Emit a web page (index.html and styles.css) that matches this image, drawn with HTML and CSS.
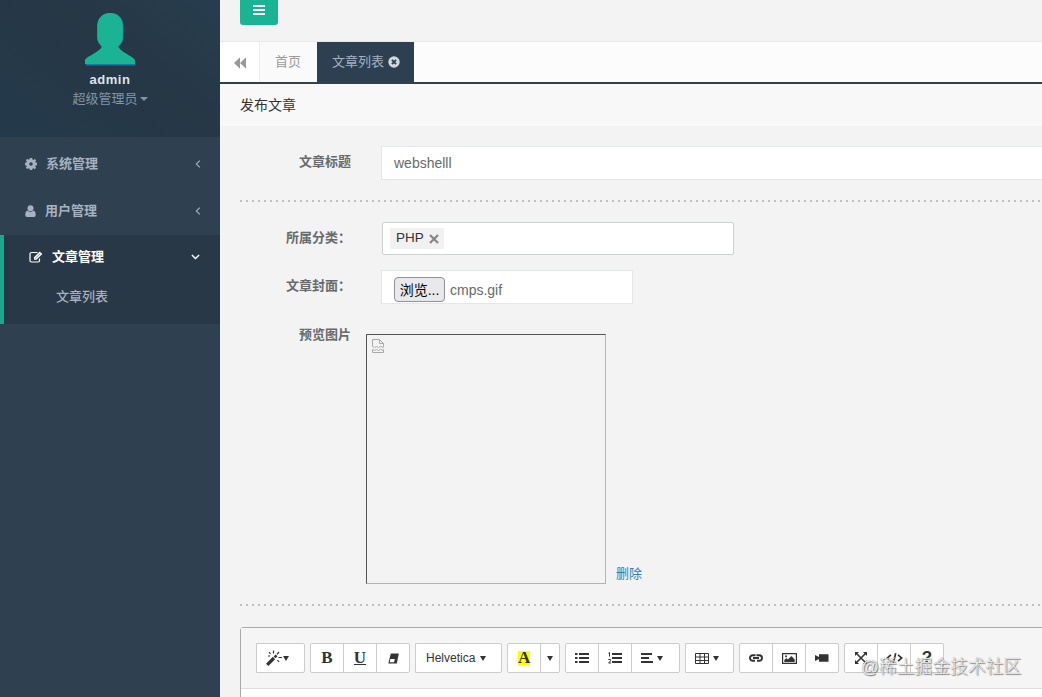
FILE: index.html
```html
<!DOCTYPE html>
<html lang="zh-CN">
<head>
    <meta charset="UTF-8">
    <meta name="viewport" content="width=device-width, initial-scale=1.0">
    <title>发布文章</title>
    <link rel="stylesheet" href="styles.css">
</head>
<body>
    <div class="wrapper">
        <nav class="sidebar">
            <div class="profile">
                <svg class="avatar" width="54" height="56" viewBox="0 0 54 56">
                    <path d="M27.500 1C36 1 40.500 7 40.500 14V25C40.500 30 38 32 36 35C38 41 52.500 46 52.500 50V53.500H3V49C3 45 16 41 19 35C16 32 14.500 30 14.500 25V14C14.500 7 19 1 27.500 1Z" fill="#1a78a0"/>
                    <path d="M27 1C35 1 39.800 7 39.800 14V25C39.800 30 37.500 31.500 35 34.500C37 40 52 45 52 48.500V52H2V48.500C2 45 17 40 19 34.500C16.500 31.500 14.200 30 14.200 25V14C14.200 7 19 1 27 1Z" fill="#1ab394"/>
                </svg>
                <strong class="profile-name">admin</strong>
                <span class="profile-role">超级管理员<i class="caret"></i></span>
            </div>
            <ul class="menu">
                <li class="menu-item">
                    <svg width="12" height="12" viewBox="0 0 12 12"><path fill="currentColor" fill-rule="evenodd" d="M4.800 0h2.400l.3 1.500 1 .4L9.800 1 11.200 2.300l-.9 1.300.3 1L12 4.800v2.400l-1.400.3-.4 1 .9 1.300L9.700 11.200l-1.300-.9-1 .4L7.200 12H4.800l-.3-1.400-1-.4-1.300.9L.8 9.700l.9-1.300-.4-1L0 7.200V4.800l1.400-.3.4-1L.9 2.200 2.300.8l1.300.9 1-.4zM6 4.200a1.800 1.800 0 100 3.600 1.800 1.800 0 000-3.600z"/></svg>
                    <span>系统管理</span>
                    <svg class="arrow" width="6" height="8" viewBox="0 0 6 8"><path d="M4.800.6L1.300 4l3.500 3.400" fill="none" stroke="currentColor" stroke-width="1.100"/></svg>
                </li>
                <li class="menu-item">
                    <svg width="11" height="12" viewBox="0 0 11 12"><circle cx="5.500" cy="3.200" r="3" fill="currentColor"/><path fill="currentColor" d="M2.600 5.500C1 5.700.3 7.500.3 10c0 1.200.7 2 1.700 2h7c1 0 1.700-.8 1.700-2 0-2.500-.7-4.300-2.300-4.500-1.500 1.700-4.300 1.700-5.800 0z"/></svg>
                    <span>用户管理</span>
                    <svg class="arrow" width="6" height="8" viewBox="0 0 6 8"><path d="M4.800.6L1.300 4l3.500 3.400" fill="none" stroke="currentColor" stroke-width="1.100"/></svg>
                </li>
                <li class="menu-active">
                    <div class="menu-item">
                        <svg width="14" height="12" viewBox="0 0 14 12"><path d="M8.500 1.500H2.500a1.500 1.500 0 00-1.500 1.500v6.500A1.500 1.500 0 002.500 11H9a1.500 1.500 0 001.500-1.500V7.500" fill="none" stroke="currentColor" stroke-width="1.200"/><path fill="currentColor" d="M5 6.200L10.800.5 13.300 3 7.500 8.800H5z"/><path d="M6.200 7.500l5.300-5.200" stroke="#293846" stroke-width=".6"/></svg>
                        <span>文章管理</span>
                        <svg class="arrow" width="9" height="6" viewBox="0 0 9 6"><path d="M.9 1l3.600 3.500L8.100 1" fill="none" stroke="currentColor" stroke-width="1.400"/></svg>
                    </div>
                    <a class="submenu">文章列表</a>
                </li>
            </ul>
        </nav>

        <main class="page">
            <div class="navbar">
                <button class="toggle" type="button">
                    <svg width="12" height="10" viewBox="0 0 12 10"><path d="M0 1h12M0 5h12M0 9h12" stroke="#fff" stroke-width="2"/></svg>
                </button>
            </div>
            <div class="tabs">
                <div class="roll"><svg width="12" height="12" viewBox="0 0 12 12"><path d="M6 .3v11.400L0 6zM12 .3v11.400L6 6z" fill="#999"/></svg></div>
                <div class="tab">首页</div>
                <div class="tab active">文章列表<svg width="12" height="12" viewBox="0 0 12 12"><circle cx="6" cy="6" r="5.700" fill="#d3d8dd"/><path d="M3.900 3.900l4.200 4.200M8.100 3.900L3.900 8.100" stroke="#2f4050" stroke-width="1.800"/></svg></div>
            </div>
            <h5 class="title">发布文章</h5>

            <form class="form">
                <div class="row">
                    <label>文章标题</label>
                    <div class="control">webshelll</div>
                </div>
                <div class="hr-line"></div>
                <div class="row">
                    <label>所属分类：</label>
                    <div class="chosen">
                        <span class="tag">PHP<svg width="10" height="10" viewBox="0 0 10 10"><path d="M1 1l8 8M9 1L1 9" stroke="#858585" stroke-width="2.200"/></svg></span>
                    </div>
                </div>
                <div class="row cover">
                    <label>文章封面：</label>
                    <div class="control file">
                        <button type="button">浏览...</button>
                        <span>cmps.gif</span>
                    </div>
                </div>
                <div class="row preview">
                    <label>预览图片</label>
                    <div class="preview-box">
                        <svg width="12" height="14" viewBox="0 0 12 14" fill="none" stroke="#a9a9a9"><path d="M.5 7.500V.5H7.500L11.500 4.500V8M7.500.5V4.500H11.500M.5 7l2 2 2-2 2 2 2-2 3 2M.5 10.500V13.500H11.500V10.500M.5 10l2 2 2-2 2 2 2-2 3 2"/></svg>
                    </div>
                    <a class="delete">删除</a>
                </div>
                <div class="hr-line"></div>

                <div class="editor">
                    <div class="toolbar">
                        <div class="btn-group">
                            <span class="btn wide"><svg width="17" height="16" viewBox="0 0 17 16"><path d="M1.200 14.800L8 8" stroke="#333" stroke-width="3.200"/><path d="M8.600 7.400l2-2" stroke="#333" stroke-width="2.600"/><path d="M3 2l1.500 2M7.500.5v3M13 2l-2 2.300M12.500 7.500H16M11.500 10l1.500 2M2 6h2" stroke="#333" stroke-width="1.200"/></svg><i class="caret"></i></span>
                        </div>
                        <div class="btn-group">
                            <span class="btn letter">B</span>
                            <span class="btn letter under">U</span>
                            <span class="btn"><svg width="11" height="11" viewBox="0 0 11 11"><path d="M2.800.5h8L8.800 10.500H.3z" fill="#333"/><path d="M2.300 6h4.500l-.8 3.200H1.700z" fill="#fff"/></svg></span>
                        </div>
                        <div class="btn-group">
                            <span class="btn font">Helvetica<i class="caret"></i></span>
                        </div>
                        <div class="btn-group">
                            <span class="btn letter"><mark>A</mark></span>
                            <span class="btn narrow"><i class="caret"></i></span>
                        </div>
                        <div class="btn-group">
                            <span class="btn"><svg width="14" height="10" viewBox="0 0 14 10"><path d="M0 1h2.500M0 5h2.500M0 9h2.500M4 1h10M4 5h10M4 9h10" stroke="#333" stroke-width="2"/></svg></span>
                            <span class="btn"><svg width="14" height="12" viewBox="0 0 14 12"><path d="M4 2h10M4 6h10M4 10h10" stroke="#333" stroke-width="2"/><path d="M.5 1.200l1-.7v4M.3 7.500h2.200v1.300L.6 11h2.400" fill="none" stroke="#333"/></svg></span>
                            <span class="btn wide"><svg width="12" height="10" viewBox="0 0 12 10"><path d="M0 1h11M0 5h8M0 9h12" stroke="#333" stroke-width="2"/></svg><i class="caret gap"></i></span>
                        </div>
                        <div class="btn-group">
                            <span class="btn wide"><svg width="14" height="11" viewBox="0 0 14 11"><path d="M.5.5h13v10H.5zM.5 4h13M.5 7.500h13M5 .5v10M9.500.5v10" fill="none" stroke="#333"/></svg><i class="caret gap"></i></span>
                        </div>
                        <div class="btn-group">
                            <span class="btn"><svg width="14" height="8" viewBox="0 0 14 8" fill="none" stroke="#333" stroke-width="1.900"><path d="M6.500 1.200H3.800a2.800 2.800 0 000 5.600H6M7.500 1.200h2.700a2.800 2.800 0 010 5.600H8M4 4h6"/></svg></span>
                            <span class="btn"><svg width="15" height="11" viewBox="0 0 15 11"><path d="M.6.6h13.800v9.800H.6z" fill="none" stroke="#333" stroke-width="1.200"/><path d="M2.300 9V7l2-2 1.500 1.500L9.500 3 12.700 6.500V9z" fill="#333"/><circle cx="4" cy="3.200" r="1" fill="#333"/></svg></span>
                            <span class="btn"><svg width="14" height="8" viewBox="0 0 14 8"><path d="M4 .3h9.500v7.400H4zM0 1l4 2v2L0 7z" fill="#333"/></svg></span>
                        </div>
                        <div class="btn-group">
                            <span class="btn"><svg width="12" height="12" viewBox="0 0 12 12"><path d="M1.500 1.500l9 9M10.500 1.500l-9 9" stroke="#333" stroke-width="1.600"/><path d="M0 0h4L0 4zM12 0v4L8 0zM0 12V8l4 4zM12 12H8l4-4z" fill="#333"/></svg></span>
                            <span class="btn"><svg width="17" height="10" viewBox="0 0 17 10"><path d="M5 1.800L1.200 5 5 8.200M12 1.800L15.800 5 12 8.200M9.700.2L7.300 9.800" fill="none" stroke="#333" stroke-width="1.700"/></svg></span>
                            <span class="btn help">?</span>
                        </div>
                    </div>
                    <div class="editable"></div>
                </div>
            </form>
        </main>
    </div>
    <div class="watermark">@稀土掘金技术社区</div>
</body>
</html>
```
FILE: styles.css
```css
* {
    box-sizing: border-box;
}

body {
    margin: 0;
    font-family: "Liberation Sans", "Noto Sans CJK SC", sans-serif;
    font-size: 13px;
    line-height: 18px;
    color: #676a6c;
    background-color: #f3f3f3;
    overflow: hidden;
}

svg {
    display: block;
    flex-shrink: 0;
}

.wrapper {
    display: flex;
    height: 697px;
}

/* Sidebar */
.sidebar {
    width: 220px;
    flex-shrink: 0;
    background-color: #2f4050;
    color: #a7b1c2;
}

.profile {
    height: 137px;
    padding-top: 12px;
    display: flex;
    flex-direction: column;
    align-items: center;
    background: linear-gradient(40deg, #243a4b, #263746 55%, #273d4d);
}

.profile-name {
    margin-top: 3px;
    font-family: "Liberation Sans", sans-serif;
    font-size: 13px;
    letter-spacing: 0.5px;
    color: #dfe4ed;
}

.profile-role {
    display: flex;
    align-items: center;
    margin-top: 1px;
    color: #8095a8;
}

.caret {
    width: 0;
    height: 0;
    border: 4px solid transparent;
    border-top-color: currentColor;
    border-bottom: 0;
}

.profile-role .caret {
    margin-left: 2px;
}

.menu {
    list-style: none;
    margin: 0;
    padding: 3px 0 0;
    font-weight: bold;
}

.menu-item {
    display: flex;
    align-items: center;
    height: 47px;
    padding: 0 19px 0 25px;
}

.menu-item span {
    margin-left: 9px;
}

.menu-item .arrow {
    margin-left: auto;
}

.menu-active {
    height: 89px;
    margin-top: 1px;
    border-left: 4px solid #19aa8d;
    background-color: #293846;
}

.menu-active .menu-item {
    height: 44px;
    padding-right: 20px;
    color: #fff;
}

.submenu {
    display: block;
    padding: 9px 0 0 52px;
    font-weight: 500;
}

/* Top bar and tabs */
.page {
    flex: 1;
    min-width: 0;
    overflow: hidden;
}

.navbar {
    height: 42px;
    padding-left: 20px;
    border-bottom: 1px solid #e7eaec;
}

.toggle {
    display: flex;
    justify-content: center;
    width: 38px;
    height: 25px;
    padding: 5px 0 0;
    border: none;
    border-radius: 0 0 3px 3px;
    background-color: #1ab394;
}

.tabs {
    display: flex;
    height: 42px;
    background-color: #fcfcfc;
    border-bottom: 2px solid #2f4050;
}

.roll {
    width: 40px;
    padding: 15px 0 0 14px;
    background-color: #fff;
    border-right: 1px solid #eee;
}

.tab {
    display: flex;
    width: 57px;
    padding: 11px 0 0 15px;
    color: #999;
    background-color: #fafafa;
}

.tab.active {
    width: 97px;
    color: #a7b1c2;
    background-color: #2c4052;
}

.tab svg {
    margin: 3px 0 0 4px;
}

.title {
    height: 42px;
    margin: 0;
    padding: 12px 20px 0;
    font-size: 14px;
    font-weight: normal;
    color: #333;
    background-color: #f8f8f8;
}

/* Form */
.form {
    padding: 20px 0 0 20px;
}

.row {
    display: flex;
}

.row label {
    width: 126px;
    padding: 7px 15px 0 0;
    font-weight: bold;
    text-align: right;
}

.control {
    flex: 1;
    height: 34px;
    margin-left: 15px;
    padding: 7px 12px;
    font-size: 14px;
    color: #676a6c;
    background-color: #fff;
    border: 1px solid #e5e6e7;
    border-right: none;
}

.hr-line {
    height: 2px;
    margin: 20px 0;
    background: repeating-linear-gradient(to right, #c0c0c0 0, #c0c0c0 2px, transparent 2px, transparent 6px);
}

.chosen {
    width: 352px;
    height: 33px;
    margin-left: 16px;
    padding: 5px 7px;
    background-color: #fff;
    border: 1px solid #cdd1d4;
    border-radius: 2px;
}

.tag {
    display: flex;
    align-items: center;
    width: 54px;
    height: 21px;
    padding: 0 0 1px 6px;
    font-size: 13.5px;
    color: #333;
    background-color: #f1f1f1;
}

.tag svg {
    margin: 1px 0 0 5px;
}

.cover {
    margin-top: 15px;
}

.control.file {
    display: flex;
    flex: none;
    width: 252px;
    padding-top: 6px;
    border-right: 1px solid #e5e6e7;
}

.file button {
    width: 51px;
    height: 25px;
    padding: 0 0 2px;
    font-family: inherit;
    font-size: 14px;
    color: #000;
    background-color: #e9e9ed;
    border: 1px solid #8f8f9d;
    border-radius: 4px;
}

.file span {
    margin: 4px 0 0 5px;
}

.preview {
    margin: 15px 0 20px;
    align-items: flex-end;
}

.preview label {
    align-self: flex-start;
}

.preview-box {
    width: 240px;
    height: 250px;
    margin-top: 15px;
    padding: 4px 5px;
    border: 1px solid #b3b3b3;
    border-top-color: #555;
    border-left-color: #555;
}

.delete {
    margin: 0 0 1px 10px;
    color: #337ab7;
}

/* Rich text editor */
.editor {
    margin-top: 21px;
    border: 1px solid #a9a9a9;
    border-right: none;
    border-radius: 4px 0 0 0;
}

.toolbar {
    display: flex;
    gap: 5px;
    height: 61px;
    padding: 15px;
    background-color: #f5f5f5;
    border-bottom: 1px solid #ddd;
}

.editable {
    height: 200px;
    background-color: #fff;
}

.btn-group {
    display: flex;
}

.btn {
    display: flex;
    align-items: center;
    justify-content: center;
    width: 34px;
    height: 30px;
    font-size: 12px;
    color: #333;
    background-color: #fff;
    border: 1px solid #ccc;
}

.btn + .btn {
    margin-left: -1px;
}

.btn:first-child {
    border-radius: 2px 0 0 2px;
}

.btn:last-child {
    border-radius: 0 2px 2px 0;
}

.btn.wide {
    width: 49px;
    justify-content: flex-start;
    padding-left: 9px;
}

.btn.narrow {
    width: 20px;
}

.btn.font {
    width: 87px;
    justify-content: flex-start;
    padding-left: 10px;
}

.btn .caret {
    border-width: 5px 3px 0;
}

.btn .caret.gap {
    margin-left: 4px;
}

.btn.font .caret {
    margin-left: 5px;
}

.btn.letter {
    font-family: "Liberation Serif", serif;
    font-size: 17px;
    font-weight: bold;
}

.btn.under {
    text-decoration: underline;
}

.btn mark {
    width: 12px;
    height: 14px;
    line-height: 14px;
    color: #333;
    background-color: #ff0;
}

.btn.help {
    font-size: 17px;
    font-weight: bold;
}

.watermark {
    position: absolute;
    left: 861px;
    top: 655px;
    font-size: 17.8px;
    line-height: 24px;
    font-weight: 300;
    color: #eee;
    white-space: nowrap;
    text-shadow: 1px 1px 1px #777, 0 0 1px #888;
}
```
